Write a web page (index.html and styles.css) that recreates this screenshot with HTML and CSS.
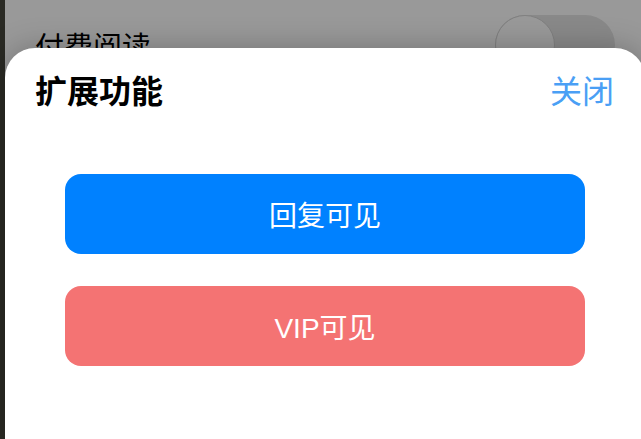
FILE: index.html
```html
<!DOCTYPE html>
<html>
<head>
    <title>扩展功能</title>
    <link rel="stylesheet" href="styles.css">
</head>
<body>
    <div class="page">
        <div class="setting-row">
            <span class="setting-label">付费阅读</span>
            <span class="switch"><span class="knob"></span></span>
        </div>

        <div class="mask"></div>

        <div class="sheet">
            <div class="sheet-head">
                <span class="sheet-title">扩展功能</span>
                <span class="sheet-close">关闭</span>
            </div>
            <div class="sheet-actions">
                <button class="action-btn reply-btn">回复可见</button>
                <button class="action-btn vip-btn">VIP可见</button>
            </div>
        </div>
    </div>
</body>
</html>
```

FILE: styles.css
```css
body, html {
    height: 100%;
    margin: 0;
    overflow: hidden;
    background-color: #2a2a24;
    font-family: "Liberation Sans", "Noto Sans CJK SC", sans-serif;
}

.page {
    position: relative;
    margin-left: 5px;
    height: 100%;
    background: white;
}

.setting-row {
    display: flex;
    align-items: center;
    justify-content: space-between;
    height: 90px;
    padding: 0 26px 0 30px;
}

.setting-label {
    font-size: 29px;
    color: #000;
}

.switch {
    position: relative;
    width: 120px;
    height: 60px;
    border-radius: 30px;
    background-color: #e4e4e4;
}

.knob {
    position: absolute;
    left: 0;
    top: 0;
    width: 58px;
    height: 58px;
    border-radius: 50%;
    background: white;
    border: 1px solid #d6d6d6;
}

.mask {
    position: absolute;
    inset: 0;
    background-color: rgba(0, 0, 0, 0.4);
}

.sheet {
    position: absolute;
    top: 48px;
    left: 0;
    width: 640px;
    bottom: 0;
    background: white;
    border-radius: 30px 30px 0 0;
    box-shadow: 0 0 30px rgba(0, 0, 0, 0.25);
}

.sheet-head {
    display: flex;
    align-items: center;
    justify-content: space-between;
    height: 42px;
    padding: 20px 31px 0 30px;
}

.sheet-title {
    font-size: 32px;
    font-weight: bold;
    color: #000;
}

.sheet-close {
    font-size: 32px;
    color: #4a9ff5;
}

.sheet-actions {
    display: flex;
    flex-direction: column;
    gap: 32px;
    padding: 64px 60px 0;
}

.action-btn {
    height: 80px;
    border: none;
    border-radius: 16px;
    color: white;
    font-family: inherit;
    font-size: 28px;
    cursor: pointer;
}

.reply-btn {
    background-color: #0081ff;
}

.vip-btn {
    background-color: #f47373;
}
```
